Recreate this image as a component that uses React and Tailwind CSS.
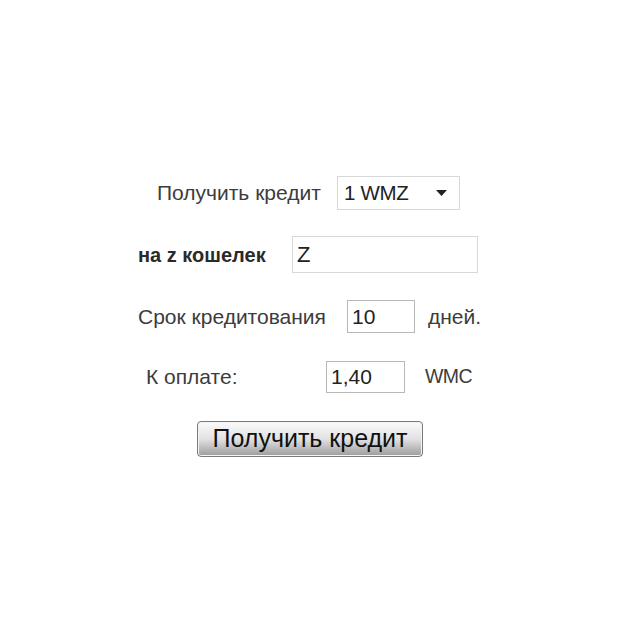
import React from "react";

export default function App() {
  const font = { fontFamily: '"Liberation Sans", Arial, sans-serif' };
  return (
    <div className="w-[640px] h-[640px] bg-white text-[#3c3c3c] text-[21px]" style={font}>
      <div className="pt-[176px] flex flex-col">
        <div className="flex items-center h-[34px]">
          <span className="ml-[157px] w-[180px]">Получить кредит</span>
          <div className="w-[123px] h-[34px] border border-[#d8d8d8] bg-white flex items-center justify-between pl-[6px] pr-[12px] text-[#222] text-[20.5px]">
            <span className="tracking-[-0.3px]">1 WMZ</span>
            <svg width="11" height="6" viewBox="0 0 11 6"><path d="M0 0h11L5.5 6z" fill="#222" /></svg>
          </div>
        </div>
        <div className="flex items-center h-[37px] mt-[26px]">
          <span className="ml-[138px] w-[154px] font-bold text-[20px] text-[#2a2a2a]">на z кошелек</span>
          <div className="w-[186px] h-[37px] border border-[#d8d8d8] bg-white flex items-center pl-[4px] text-[22px] text-[#222]">Z</div>
        </div>
        <div className="flex items-center h-[33px] mt-[27px]">
          <span className="ml-[138px] w-[209px]">Срок кредитования</span>
          <div className="w-[68px] h-[33px] border border-[#b8b8b8] bg-white flex items-center pl-[4px] text-[#222]">10</div>
          <span className="ml-[13px]">дней.</span>
        </div>
        <div className="flex items-center h-[32px] mt-[28px]">
          <span className="ml-[146px] w-[180px]">К оплате:</span>
          <div className="w-[79px] h-[32px] border border-[#b8b8b8] bg-white flex items-center pl-[4px] text-[#222]">1,40</div>
          <span className="ml-[20px] text-[19.5px] tracking-[-0.6px]">WMC</span>
        </div>
        <div className="flex mt-[28px]">
          <div className="ml-[197px] w-[226px] h-[36px] rounded-[4px] border border-[#7a7a7a] bg-gradient-to-b from-[#fbfbfb] via-[#e2e2e2] to-[#9c9c9c] flex items-center justify-center text-[25px] text-[#111] shadow-[inset_0_0_0_1px_#f4f4f4]">
            Получить кредит
          </div>
        </div>
      </div>
    </div>
  );
}
